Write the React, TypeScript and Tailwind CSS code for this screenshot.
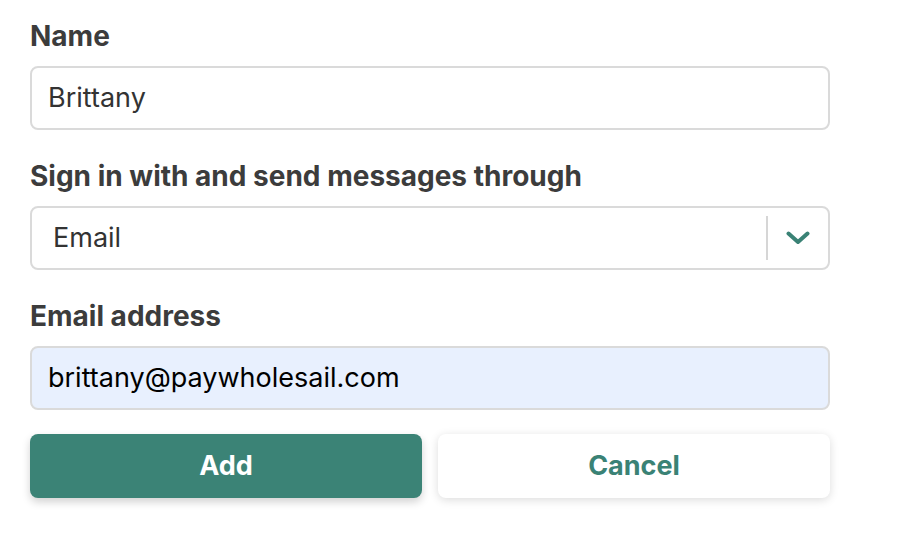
const Field = ({ label, children }: { label: string; children: React.ReactNode }) => {
  return (
    <div className="flex flex-col">
      <label className="text-[28px] leading-[40px] font-bold text-[#3c3c3c] mb-[10px]">{label}</label>
      {children}
    </div>
  );
};

const App = () => {
  return (
    <div className="min-h-[540px] bg-white pl-[30px] pt-[16px]" style={{ fontFamily: 'Inter, "Liberation Sans", sans-serif' }}>
      <div className="w-[800px] flex flex-col gap-[26px]">
        <Field label="Name">
          <div className="h-[64px] rounded-[8px] border-2 border-[#dadada] bg-white flex items-center px-[16px]">
            <span className="text-[27px] text-[#333333]">Brittany</span>
          </div>
        </Field>
        <Field label="Sign in with and send messages through">
          <div className="h-[64px] rounded-[8px] border-2 border-[#dadada] bg-white flex items-center">
            <span className="flex-1 pl-[21px] text-[27px] text-[#333333]">Email</span>
            <div className="h-[44px] w-[2px] bg-[#d6d6d6]" />
            <div className="w-[60px] flex items-center justify-center">
              <svg width="24" height="14" viewBox="0 0 24 14" fill="none">
                <path d="M2.5 2.5 L12 11 L21.5 2.5" stroke="#3a8275" strokeWidth="4" strokeLinecap="round" strokeLinejoin="round" />
              </svg>
            </div>
          </div>
        </Field>
        <div>
          <Field label="Email address">
            <div className="h-[64px] rounded-[8px] border-2 border-[#dadada] bg-[#e8f0fe] flex items-center px-[16px]">
              <span className="text-[27px] text-black">brittany@paywholesail.com</span>
            </div>
          </Field>
          <div className="flex gap-[16px] mt-[24px]">
            <button className="flex-1 h-[64px] rounded-[8px] bg-[#3b8376] text-white text-[27px] font-bold shadow-[0_4px_8px_rgba(0,0,0,0.18)]">
              Add
            </button>
            <button className="flex-1 h-[64px] rounded-[8px] bg-white text-[#3a8275] text-[27px] font-bold shadow-[0_2px_10px_rgba(0,0,0,0.14)]">
              Cancel
            </button>
          </div>
        </div>
      </div>
    </div>
  );
};

export default App;
